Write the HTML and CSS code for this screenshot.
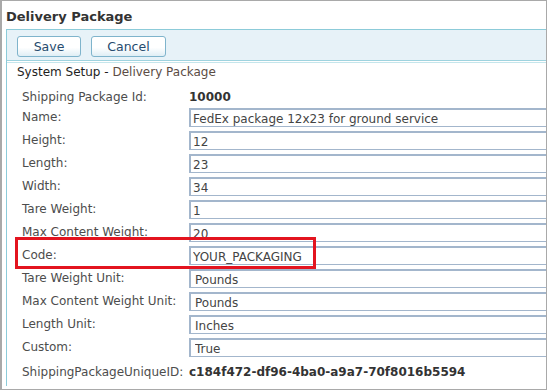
FILE: index.html
```html
<!DOCTYPE html>
<html lang="en">
<head>
    <meta charset="UTF-8">
    <title>Delivery Package</title>
    <link rel="stylesheet" href="styles.css">
</head>
<body>
    <div class="frame">
        <h1 class="page-title">Delivery Package</h1>
        <div class="panel">
            <div class="toolbar">
                <button class="btn">Save</button>
                <button class="btn">Cancel</button>
            </div>
            <div class="panel-body">
                <div class="crumb">System Setup - <span class="crumb-page">Delivery Package</span></div>
                <div class="form">
                    <div class="row static"><label>Shipping Package Id:</label><span class="value">10000</span></div>
                    <div class="row"><label>Name:</label><input type="text" value="FedEx package 12x23 for ground service"></div>
                    <div class="row"><label>Height:</label><input type="text" value="12"></div>
                    <div class="row"><label>Length:</label><input type="text" value="23"></div>
                    <div class="row"><label>Width:</label><input type="text" value="34"></div>
                    <div class="row"><label>Tare Weight:</label><input type="text" value="1"></div>
                    <div class="row"><label>Max Content Weight:</label><input type="text" value="20"></div>
                    <div class="row highlight"><label>Code:</label><input type="text" value="YOUR_PACKAGING"></div>
                    <div class="row"><label>Tare Weight Unit:</label><input type="text" class="pad" value="Pounds"></div>
                    <div class="row"><label>Max Content Weight Unit:</label><input type="text" class="pad" value="Pounds"></div>
                    <div class="row"><label>Length Unit:</label><input type="text" class="pad" value="Inches"></div>
                    <div class="row"><label>Custom:</label><input type="text" class="pad" value="True"></div>
                    <div class="row static"><label>ShippingPackageUniqueID:</label><span class="value">c184f472-df96-4ba0-a9a7-70f8016b5594</span></div>
                </div>
            </div>
        </div>
    </div>
</body>
</html>
```

FILE: styles.css
```css
:root {
    --frame: #a9a9a9;
    --panel-line: #8ccbd9;
    --toolbar-bg: #e7f2f8;
    --label: #4d4d4d;
    --input-line: #a3b6cc;
}
html, body {
    margin: 0;
    padding: 0;
    background: #fff;
}
body {
    font-family: Verdana, 'DejaVu Sans', sans-serif;
    font-size: 12px;
    color: #333;
}
.frame {
    width: 547px;
    height: 390px;
    box-sizing: border-box;
    border: 1px solid var(--frame);
    border-left-width: 2px;
    overflow: hidden;
    padding: 0 0 0 4px;
}
.page-title {
    margin: 0;
    height: 28px;
    line-height: 31px;
    font-size: 13px;
    font-weight: bold;
    color: #333;
}
.panel {
    width: 620px;
    height: 356px;
    border-top: 1px solid var(--panel-line);
    border-left: 1px solid var(--panel-line);
}
.toolbar {
    background: var(--toolbar-bg);
    height: 30px;
    border-bottom: 1px solid #9fd3df;
    display: flex;
    align-items: center;
    gap: 10px;
    padding: 0 0 0 10px;
}
.btn {
    font-family: inherit;
    font-size: 12.5px;
    color: #264b6e;
    height: 21px;
    padding: 0;
    border: 1px solid #7fb4cc;
    border-radius: 3px;
    background: linear-gradient(#ffffff, #ffffff 55%, #dfeef5);
    margin-top: 2px;
}
.btn:first-child { width: 64px; }
.btn:last-child { width: 75px; }
.panel-body {
    border-top: 1px solid #c5e6ec;
    margin-top: 1px;
    padding: 1px 0 0 10px;
}
.crumb {
    font-size: 12px;
    color: #1e1e1e;
    height: 17px;
    line-height: 17px;
}
.crumb-page {
    color: #5b4c44;
}
.form {
    padding: 5px 0 0 5px;
}
.row {
    display: grid;
    grid-template-columns: 167px 420px;
    align-items: start;
    height: 23px;
    position: relative;
}
.row label {
    color: var(--label);
    line-height: 17px;
    padding-top: 1px;
}
.row.static {
    height: 22px;
    align-items: center;
}
.row.static label {
    padding-top: 0;
}
.value {
    font-weight: bold;
    color: #333;
}
.row input {
    font-family: inherit;
    font-size: 12px;
    color: #444;
    height: 19px;
    box-sizing: border-box;
    border: 1px solid var(--input-line);
    border-width: 2px 1px 1px 2px;
    padding: 1px 0 0 2px;
    margin: 0;
    outline: none;
}
.row input.pad {
    padding-left: 4px;
}
.row.highlight::after {
    content: "";
    position: absolute;
    left: -7px;
    top: -9px;
    width: 301px;
    height: 32px;
    box-sizing: border-box;
    border: 3px solid #e3141f;
}
```
